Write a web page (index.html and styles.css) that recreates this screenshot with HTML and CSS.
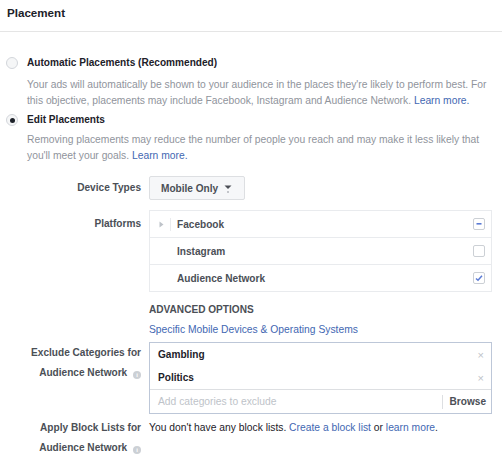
FILE: index.html
```html
<!DOCTYPE html>
<html>
<head>
<meta charset="utf-8">
<link rel="stylesheet" href="styles.css">
</head>
<body>
<div class="panel">
  <div class="header">Placement</div>
  <div class="options">
    <div class="option">
      <div class="opt-label"><span class="radio"></span>Automatic Placements (Recommended)</div>
      <div class="desc">Your ads will automatically be shown to your audience in the places they're likely to perform best. For this objective, placements may include Facebook, Instagram and Audience Network. <a class="link">Learn more.</a></div>
    </div>
    <div class="option second">
      <div class="opt-label"><span class="radio on"></span>Edit Placements</div>
      <div class="desc">Removing placements may reduce the number of people you reach and may make it less likely that you'll meet your goals. <a class="link">Learn more.</a></div>
    </div>
  </div>

  <div class="form">
    <div class="label device-label">Device Types</div>
    <div class="field">
      <div class="dropdown">Mobile Only <span class="caret"><svg width="8" height="9" viewBox="0 0 8 9"><path d="M0.5 1.5 H7.5 L4 5 Z" fill="#4b4f56"/><rect x="3" y="7.5" width="2" height="1" fill="#90949c"/></svg></span></div>
    </div>

    <div class="label plat-label">Platforms</div>
    <div class="field">
      <div class="platforms">
        <div class="prow">
          <span class="expander"><svg width="5" height="7" viewBox="0 0 5 7"><path d="M0.5 0.5 L4.5 3.5 L0.5 6.5 Z" fill="#bec3c9"/></svg></span>
          <span class="pname">Facebook</span>
          <span class="check"><svg width="8" height="8" viewBox="0 0 8 8"><rect x="1.5" y="3" width="5" height="1.6" fill="#5b7bd5"/></svg></span>
        </div>
        <div class="prow">
          <span class="expander empty"></span>
          <span class="pname">Instagram</span>
          <span class="check"></span>
        </div>
        <div class="prow">
          <span class="expander empty"></span>
          <span class="pname">Audience Network</span>
          <span class="check"><svg width="10" height="10" viewBox="0 0 10 10"><path d="M2 5.5 L4 7.3 L8 2.8" fill="none" stroke="#5b7bd5" stroke-width="1.5"/></svg></span>
        </div>
      </div>
    </div>

    <div class="label"></div>
    <div class="field advanced">
      <div class="adv-title">ADVANCED OPTIONS</div>
      <a class="link">Specific Mobile Devices &amp; Operating Systems</a>
    </div>

    <div class="label multi exclude-label">Exclude Categories for<br>Audience Network <span class="info">i</span></div>
    <div class="field">
      <div class="exclude">
        <div class="tags">
          <div class="tag"><span>Gambling</span><span class="x">×</span></div>
          <div class="tag"><span>Politics</span><span class="x">×</span></div>
        </div>
        <div class="input-row">
          <span class="placeholder">Add categories to exclude</span>
          <span class="browse">Browse</span>
        </div>
      </div>
    </div>

    <div class="label multi block-label">Apply Block Lists for<br>Audience Network <span class="info">i</span></div>
    <div class="field block-text">You don't have any block lists. <a class="link">Create a block list</a> or <a class="link">learn more</a>.</div>
  </div>
</div>
</body>
</html>
```

FILE: styles.css
```css
* { box-sizing: border-box; }
html, body { margin: 0; padding: 0; background: #fff; }
body {
  font-family: Helvetica, "Liberation Sans", Arial, sans-serif;
  font-size: 10.1px;
  color: #4b4f56;
}
.panel { width: 502px; }
.header {
  height: 32px;
  padding: 5px 7px 0;
  line-height: 16px;
  font-size: 11.6px;
  font-weight: bold;
  color: #1d2129;
  border-bottom: 1px solid #e5e5e5;
}
.options { padding: 23px 10px 0 6px; }
.option + .option { margin-top: 3px; }
.opt-label {
  display: flex;
  align-items: center;
  line-height: 16px;
  font-weight: bold;
  color: #1d2129;
}
.radio {
  width: 12px;
  height: 12px;
  border-radius: 50%;
  border: 1px solid #d3d6db;
  background: #f5f6f7;
  margin-right: 9px;
  display: inline-flex;
  align-items: center;
  justify-content: center;
  flex: none;
}
.radio.on::after {
  content: "";
  width: 5px;
  height: 5px;
  border-radius: 50%;
  background: #1d2129;
}
.desc {
  margin: 6px 0 0 21px;
  line-height: 16px;
  font-size: 10.3px;
  color: #90949c;
}
.second .desc { margin-top: 4px; }
.link { color: #4267b2; text-decoration: none; }

.form {
  display: grid;
  grid-template-columns: 134px 1fr;
  column-gap: 8px;
  padding: 0 10px 0 7px;
  margin-top: 12px;
}
.label {
  text-align: right;
  font-weight: bold;
  color: #4b4f56;
  line-height: 20px;
}
.device-label { padding-top: 2px; }
.dropdown {
  display: inline-flex;
  align-items: center;
  height: 24px;
  padding: 0 12px 0 11px;
  background: #f6f7f9;
  border: 1px solid #dddfe2;
  border-radius: 2px;
  font-weight: bold;
  color: #4b4f56;
}
.caret { margin-left: 6px; display: inline-flex; }

.plat-label { margin-top: 10px; padding-top: 4px; }
.platforms {
  margin-top: 10px;
  border: 1px solid #e9ebee;
}
.prow {
  display: flex;
  align-items: center;
  height: 27px;
  border-top: 1px solid #e9ebee;
  padding: 0 6px 0 9px;
}
.prow:first-child { border-top: none; height: 26px; }
.expander {
  width: 12px;
  height: 13px;
  display: inline-flex;
  align-items: center;
  border-right: 1px solid #e9ebee;
  margin-right: 6px;
}
.expander.empty { border-right-color: transparent; }
.pname { flex: 1; font-weight: bold; color: #4b4f56; }
.check {
  width: 12px;
  height: 12px;
  border: 1px solid #ccd0d5;
  border-radius: 2px;
  background: #fff;
  display: inline-flex;
  align-items: center;
  justify-content: center;
}

.advanced { margin-top: 10px; line-height: 16px; }
.adv-title { font-weight: bold; color: #4b4f56; margin-bottom: 4px; }
.advanced .link { font-size: 10.3px; }

.multi { line-height: 20px; }
.exclude-label { margin-top: 4px; padding-top: 1px; }
.info {
  display: inline-block;
  width: 8px;
  height: 8px;
  border-radius: 50%;
  background: #ccd0d5;
  color: #fff;
  font-size: 6px;
  line-height: 8px;
  text-align: center;
  vertical-align: -1px;
  margin-left: 3px;
  font-weight: bold;
}
.exclude {
  margin-top: 4px;
  border: 1px solid #bdc7d8;
}
.tag {
  display: flex;
  justify-content: space-between;
  align-items: center;
  height: 23px;
  padding: 0 7px 0 8px;
  font-weight: bold;
  color: #1d2129;
}
.x { color: #bec3c9; font-weight: normal; font-size: 11px; }
.input-row {
  display: flex;
  align-items: center;
  height: 24px;
  border-top: 1px solid #dddfe2;
  padding: 0 5px 0 8px;
}
.placeholder { flex: 1; color: #bec3c9; font-size: 10.3px; }
.browse {
  font-weight: bold;
  color: #4b4f56;
  border-left: 1px solid #dddfe2;
  padding-left: 7px;
  line-height: 14px;
}
.block-label { margin-top: 4px; }
.block-text { margin-top: 4px; line-height: 20px; color: #1d2129; font-size: 10.3px; }
```
